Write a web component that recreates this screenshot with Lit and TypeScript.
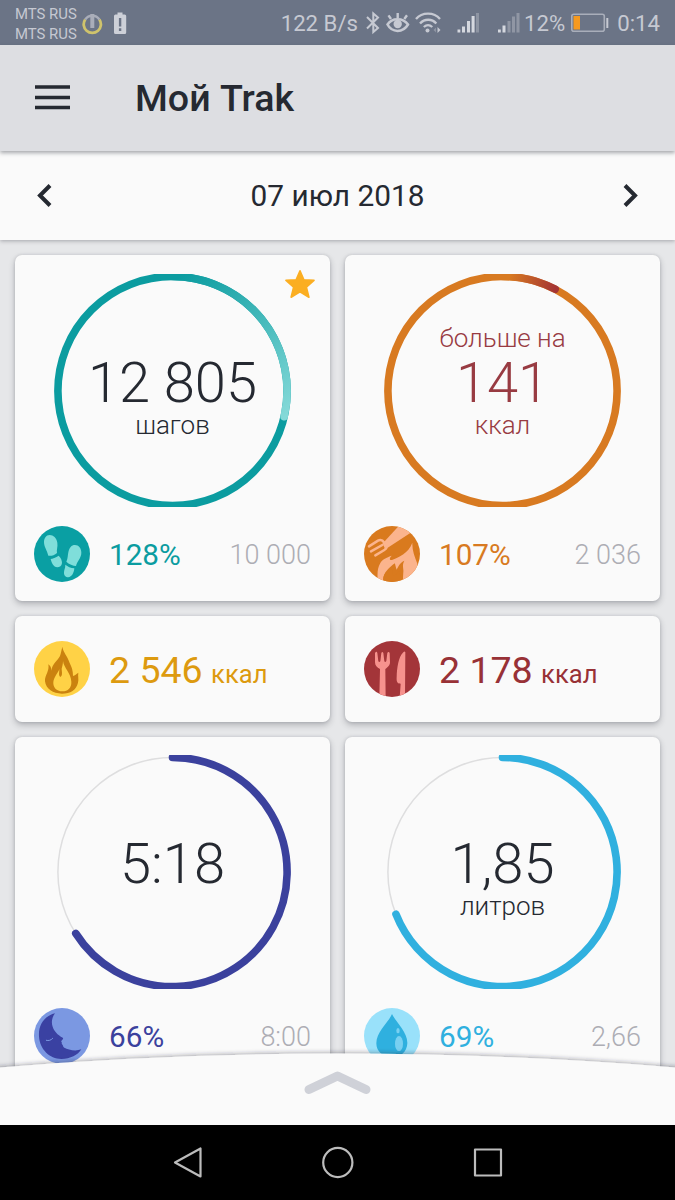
import { LitElement, html, svg, css, nothing } from "lit";
import { customElement, property } from "lit/decorators.js";

const DISC = {
  steps: svg`
    <circle cx="84" cy="84" r="84" fill="#0a9fa3"/>
    <g fill="#7fdeda">
      <path d="M47 27 C36 27 30 37 30 49 C30 62 39 73 43 89 C50 91 61 88 69 81 C67 71 72 63 70 50 C68 36 58 27 47 27Z"/>
      <path d="M50 99 C55 98 66 94 74 89 C81 96 84 103 84 111 C83 120 77 124 70 124 C58 123 53 111 50 99Z"/>
      <path d="M123 57 C134 57 142 67 142 80 C142 96 130 104 126 120 C118 120 104 114 97 107 C102 97 101 88 103 79 C106 65 112 57 123 57Z"/>
      <path d="M94 116 C101 122 110 126 121 127 C120 141 113 153 103 154 C95 154 89 148 90 139 C90 132 94 127 94 116Z"/>
    </g>`,
  balance: svg`
    <circle cx="84" cy="84" r="84" fill="#d97a1e"/>
    <g clip-path="url(#disc)">
      <path fill="#fbb48d" d="M106 -2 L140 20 L70 66 L58 50Z"/>
      <g fill="none" stroke="#fbb48d" stroke-width="7.500" stroke-linecap="round" stroke-linejoin="round">
        <path d="M15 61 L42 44 C50 40 57 44 61 50 L66 58 C69 65 67 69 61 72 L34 88"/><path d="M55 57 L21 76"/>
      </g>
      <path fill="#fbb48d" d="M55 50 L66 48 L72 60 L62 66Z"/>
      <path fill="#fbb48d" d="M42 172 C39 145 40 126 49 111 C57 98 70 94 83 89 C75 97 76 104 84 102 C103 94 133 83 145 50 C144 72 152 92 160 113 L162 132 L120 168 C114 157 119 146 118 132 C117 121 115 116 121 104 C108 110 104 119 98 131 C94 122 95 117 92 112 C76 126 54 140 58 168Z"/>
      <path fill="#d97a1e" d="M58 170 C55 143 70 134 84 130 C87 137 82 144 89 149 C97 146 101 140 106 134 C106 146 112 154 117 168Z"/>
    </g>`,
  burn: svg`
    <circle cx="84" cy="84" r="84" fill="#ffd246"/>
    <path fill="#ca820f" d="M85 17 C88 35 101 46 107 66 C113 78 117 88 117 105 C123 103 127 99 133 95 C131 106 135 114 132 125 C127 147 109 158 84 158 C57 158 36 144 33 121 C32 103 47 91 43 70 C49 74 52 80 52 89 C55 67 70 61 78 45 C81 37 82 28 85 17Z"/>
    <path fill="#ffd246" d="M87 60 C90 82 111 96 112 122 C113 140 102 151 85 151 C67 151 57 139 58 123 C60 107 73 95 76 84 C76 96 73 103 79 108 C87 103 83 91 83 83 C85 75 87 69 87 60Z"/>`,
  food: svg`
    <circle cx="84" cy="84" r="84" fill="#a33539"/>
    <g clip-path="url(#disc)" fill="#f6928d">
      <path d="M33 37 C35 31 39 31 40 36 L43 61 Q46 65 49 61 L52 36 Q55 30 58 36 L61 61 Q64 65 67 60 L70 36 C72 31 76 32 77 37 L78 64 C78 74 70 80 64 84 L65 170 L46 170 L48 84 C39 79 33 74 33 64Z"/>
      <path d="M124 34 L123 170 L107 170 L110 128 C100 127 97 123 98 108 C99 81 103 48 118 34 Q122 29 124 34Z"/>
    </g>`,
  sleep: svg`
    <circle cx="84" cy="84" r="84" fill="#7b98e2"/>
    <path fill="#3a41a2" d="M63 16 C29 25 13 52 15 85 C17 124 47 153 82 153 C109 153 132 141 142 124 C124 131 102 125 91 119 C86 117 88 112 84 109 C82 106 85 104 82 101 C80 97 89 94 87 90 C83 88 78 85 75 82 C57 68 44 42 63 16Z"/>
    <path fill="none" stroke="#7b98e2" stroke-width="3" stroke-linecap="round" d="M37 97 C44 99 51 97 56 91"/>`,
  water: svg`
    <circle cx="84" cy="84" r="84" fill="#99e1fa"/>
    <path fill="#2fb0df" d="M84 18 C96 43 131 72 130 106 C129 132 110 148 84 148 C57 148 37 131 37 106 C37 72 72 45 84 18Z"/>
    <ellipse cx="105" cy="107" rx="12" ry="23" fill="#79d0f1"/>
    <ellipse cx="102" cy="68" rx="5" ry="8" fill="#79d0f1"/>`,
} as const;
type DiscName = keyof typeof DISC;

@customElement("metric-icon")
class MetricIcon extends LitElement {
  @property() name: DiscName = "steps";
  static styles = css`
    :host { display: block; width: 56px; height: 56px; flex: none; }
    .disc { display: block; width: 56px; height: 56px; }
  `;
  render() {
    return html`<svg class="disc" viewBox="0 0 168 168">
      <defs><clipPath id="disc"><circle cx="84" cy="84" r="84"/></clipPath></defs>
      ${DISC[this.name]}
    </svg>`;
  }
}

interface Metric {
  icon: DiscName;
  percent: number;
  color: string;
  over?: string;
  goal: string;
  pre?: string;
  value: string;
  unit?: string;
  text?: string;
  starred?: boolean;
}

@customElement("progress-ring")
class ProgressRing extends LitElement {
  @property({ type: Number }) percent = 0;
  @property() color = "#000";
  @property() over = "";
  static styles = css`
    :host { display: block; }
    .ring { display: block; width: 240px; height: 233.5px; }
  `;
  private arc(percent: number) {
    const a = (percent / 100) * 2 * Math.PI;
    const r = 114.6;
    const x = 119.5 + r * Math.sin(a);
    const y = 117 - r * Math.cos(a);
    return `M119.5 ${117 - r} A${r} ${r} 0 ${percent > 50 ? 1 : 0} 1 ${x.toFixed(2)} ${y.toFixed(2)}`;
  }
  render() {
    const full = this.percent >= 100;
    const extra = this.percent - 100 + 0.6;
    const a = (extra / 100) * 2 * Math.PI;
    return html`<svg class="ring" viewBox="0 0 240 233.5">
      <defs>
        <linearGradient id="over" gradientUnits="userSpaceOnUse" x1="126" y1="3"
          x2=${119.5 + 114.6 * Math.sin(a)} y2=${117 - 114.6 * Math.cos(a)}>
          <stop offset="0" stop-color=${this.color}/>
          <stop offset="1" stop-color=${this.over || this.color}/>
        </linearGradient>
      </defs>
      ${full
        ? svg`<circle cx="119.5" cy="117" r="114.6" fill="none" stroke=${this.color} stroke-width="7.6"/>
            <path d=${this.arc(extra)} fill="none" stroke="url(#over)" stroke-width="7.6" stroke-linecap="round"/>`
        : svg`<circle cx="119.5" cy="117" r="114.6" fill="none" stroke="#dededf" stroke-width="1.5"/>
            <path d=${this.arc(this.percent)} fill="none" stroke=${this.color} stroke-width="7.6" stroke-linecap="round"/>`}
    </svg>`;
  }
}

@customElement("goal-card")
class GoalCard extends LitElement {
  @property({ attribute: false }) metric!: Metric;
  static styles = css`
    :host {
      display: block; position: relative; box-sizing: border-box; height: 346px;
      padding: 18.5px 19px; border-radius: 7px; background: #fafafa;
      box-shadow: 0 3px 6px rgba(40, 44, 54, .28), 0 0 3px rgba(40, 44, 54, .16);
    }
    .dial { display: grid; justify-content: center; }
    .dial > * { grid-area: 1 / 1; }
    .label {
      display: flex; flex-direction: column; align-items: center;
      padding-top: 49px; color: #252931; font-weight: 300; white-space: nowrap;
    }
    .pre { height: 30px; line-height: 30px; font-size: 26px; }
    .value { line-height: 60px; font-size: 56px; }
    .unit { line-height: 24px; font-size: 26px; }
    .red { color: #983b42; }
    .foot { display: flex; align-items: center; margin-top: 19px; }
    .percent { flex: 1; margin-left: 19px; font-size: 29.7px; line-height: 56px; padding-top: 1px; height: 55px; }
    .goal { font-size: 27px; font-weight: 300; color: #adadb4; line-height: 56px; padding-top: 1px; height: 55px; }
    .star { position: absolute; top: 14px; right: 15px; width: 30px; height: 30px; }
  `;
  render() {
    const m = this.metric;
    return html`
      <div class="dial">
        <progress-ring .percent=${m.percent} .color=${m.color} .over=${m.over ?? ""}></progress-ring>
        <div class="label ${m.text ?? ""}">
          <div class="pre">${m.pre ?? nothing}</div>
          <div class="value">${m.value}</div>
          ${m.unit ? html`<div class="unit">${m.unit}</div>` : nothing}
        </div>
      </div>
      <div class="foot">
        <metric-icon .name=${m.icon}></metric-icon>
        <div class="percent" style="color:${m.color}">${m.percent}%</div>
        <div class="goal">${m.goal}</div>
      </div>
      ${m.starred
        ? html`<svg class="star" viewBox="0 0 30 30"><path fill="#fbae22" stroke="#fbae22" stroke-width="1.6" stroke-linejoin="round"
            d="M15 1.800 L18.900 10.700 L29 11.400 L21.400 18.200 L23.900 28.200 L15 22.800 L6.100 28.200 L8.600 18.200 L1 11.400 L11.100 10.700Z"/></svg>`
        : nothing}
    `;
  }
}

@customElement("energy-card")
class EnergyCard extends LitElement {
  @property() icon: DiscName = "burn";
  @property() value = "";
  @property() color = "";
  static styles = css`
    :host {
      display: flex; align-items: center; box-sizing: border-box; height: 105.5px;
      padding: 0 19px; border-radius: 7px; background: #fafafa;
      box-shadow: 0 3px 6px rgba(40, 44, 54, .28), 0 0 3px rgba(40, 44, 54, .16);
    }
    .amount { margin-left: 19px; padding-top: 6px; white-space: nowrap; font-size: 37.5px; line-height: 50px; }
    .unit { font-size: 25.6px; margin-left: 8.5px; }
  `;
  render() {
    return html`<metric-icon .name=${this.icon}></metric-icon>
      <div class="amount" style="color:${this.color}">${this.value}<span class="unit">ккал</span></div>`;
  }
}

@customElement("status-bar")
class StatusBar extends LitElement {
  static styles = css`
    :host {
      display: flex; align-items: center; justify-content: space-between; box-sizing: border-box;
      height: 45px; padding: 0 15px; background: #6b7486; color: #c6c9d2; font-size: 22.2px;
    }
    .carriers { width: 63px; font-size: 14.9px; line-height: 20px; white-space: nowrap; padding-top: 2px; }
    .side { display: flex; align-items: center; }
    .text { line-height: 45px; padding-top: 1px; height: 44px; white-space: nowrap; }
    svg { display: block; flex: none; }
    .notices { margin-left: 4px; }
    .glyphs { margin: 0 3px 0 7px; }
    .battery { margin: 0 8px 0 6px; }
  `;
  render() {
    return html`
      <div class="side">
        <div class="carriers">MTS RUS<br>MTS RUS</div>
        <svg class="notices" width="46" height="45" viewBox="0 0 46 45">
          <path d="M3.200 19.500 A8.600 8.600 0 1 0 17.400 19.500" fill="none" stroke="#cfc36c" stroke-width="2.800"/>
          <path d="M3.200 19.500 A8.600 8.600 0 0 1 17.400 19.500" fill="none" stroke="#a9adb9" stroke-width="2.400"/>
          <path d="M10.300 14 V28" stroke="#a9adb9" stroke-width="4"/>
          <path d="M35.500 12.500h5v2h2.200a1.500 1.500 0 0 1 1.500 1.500v16.500a1.500 1.500 0 0 1-1.500 1.500h-9.200a1.500 1.500 0 0 1-1.500-1.500v-16.500a1.500 1.500 0 0 1 1.500-1.500h2z" fill="#cdd0d8"/>
          <path d="M38.100 18 V26.500 M38.100 28.300 V31" stroke="#6b7486" stroke-width="2.400"/>
        </svg>
      </div>
      <div class="side">
        <div class="text">122 B/s</div>
        <svg class="glyphs" width="156" height="45" viewBox="366 0 156 45">
          <path d="M368 17 L379 28 L374.300 32 V13.500 L379 17.500 L368 28.500" fill="none" stroke="#c6c9d2" stroke-width="2"/>
          <path d="M388.500 24.500 C393 17.500 404 17.500 409 24.500 C404 33 393 33 388.500 24.500Z" fill="none" stroke="#c6c9d2" stroke-width="2.500"/>
          <circle cx="398.700" cy="24" r="4.200" fill="#c6c9d2"/>
          <path d="M398.700 18 V13 M392 19 L389.500 15.300 M405.300 19 L408 15.300" stroke="#c6c9d2" stroke-width="2.400"/>
          <g fill="none" stroke="#c6c9d2" stroke-width="2.300">
            <path d="M417 19 C423 11.800 435 11.800 441 19"/><path d="M421 23.500 C425.500 18.500 433 18.500 437.300 23.500"/><path d="M424.800 27 Q429 23.300 433.300 27"/>
          </g>
          <circle cx="428.500" cy="30.500" r="2" fill="#c6c9d2"/>
          <path d="M437 27.500 L434.500 30 L437 32.500Z" fill="#8e95a3"/><path d="M438.500 27 L441.500 30 L438.500 33Z" fill="#c6c9d2"/>
          <g fill="#d5d8df">
            <path d="M458.500 29.500h2.800v3h-2.800zM463 26.500h3v6h-3zM468 21h3v11.500h-3zM472.600 16h3v16.500h-3z"/>
            <path d="M477 13h3v19.500h-3z" fill="#8e95a3"/>
            <path d="M499 29.500h2.800v3h-2.800zM503.500 25.500h3v7h-3z"/>
            <path d="M508.500 21h3v11.500h-3zM513 16.500h3v16h-3zM517.500 13h3v19.500h-3z" fill="#9096a4"/>
          </g>
        </svg>
        <div class="text">12%</div>
        <svg class="battery" width="38" height="45" viewBox="0 0 38 45">
          <rect x=".8" y="14.200" width="32.500" height="17" rx="2" fill="none" stroke="#a9aeba" stroke-width="1.600"/>
          <path d="M36.300 18 V28" stroke="#c6c9d2" stroke-width="2"/>
          <rect x="2.500" y="16" width="6.500" height="13.500" fill="#f5991f"/>
        </svg>
        <div class="text">0:14</div>
      </div>`;
  }
}

@customElement("app-root")
class AppRoot extends LitElement {
  static styles = css`
    :host {
      display: flex; flex-direction: column; width: 675px; height: 1200px; overflow: hidden;
      position: relative; background: #e6e7e9; font-family: Roboto, "Liberation Sans", sans-serif; color: #252931;
    }
    .bar {
      display: flex; align-items: center; gap: 65px; height: 106px; padding: 0 34px;
      box-sizing: border-box; background: #dddee2; position: relative; z-index: 2;
      box-shadow: 0 2px 4px rgba(40, 44, 54, .4);
    }
    .title { font-size: 37.6px; font-weight: 500; line-height: 106px; }
    .date {
      display: flex; align-items: center; justify-content: space-between; height: 89px;
      padding: 0 36px; background: #fafafa; position: relative; z-index: 1;
      box-shadow: 0 1px 4px rgba(40, 44, 54, .35); font-size: 29.8px;
    }
    .grid {
      flex: 1; min-height: 0; overflow: hidden; display: grid; grid-template-columns: 315px 315px;
      align-content: start; gap: 15px; padding: 15px;
    }
    .sheet { position: absolute; left: 0; bottom: 75px; display: block; }
    .nav { height: 75px; flex: none; background: #000; display: flex; align-items: center; justify-content: center; }
    svg { display: block; flex: none; }
  `;
  private top: Metric[] = [
    { icon: "steps", percent: 128, color: "#0b9ca0", over: "#84d9d8", goal: "10 000", value: "12 805", unit: "шагов", starred: true },
    { icon: "balance", percent: 107, color: "#d87a21", over: "#a43434", goal: "2 036", pre: "больше на", value: "141", unit: "ккал", text: "red" },
  ];
  private bottom: Metric[] = [
    { icon: "sleep", percent: 66, color: "#3b419d", goal: "8:00", value: "5:18" },
    { icon: "water", percent: 69, color: "#30b0df", goal: "2,66", value: "1,85", unit: "литров" },
  ];
  render() {
    return html`
      <status-bar></status-bar>
      <div class="bar">
        <svg width="36" height="26" viewBox="0 0 36 26"><path d="M1 2H36M1 12.500H36M1 22.500H36" stroke="#252931" stroke-width="3.700"/></svg>
        <div class="title">Мой Trak</div>
      </div>
      <div class="date">
        <svg width="16" height="26" viewBox="0 0 16 26"><path d="M14 2.500 L4 12.500 L14 22.500" fill="none" stroke="#252931" stroke-width="4"/></svg>
        <div>07 июл 2018</div>
        <svg width="16" height="26" viewBox="0 0 16 26"><path d="M2 2.500 L12 12.500 L2 22.500" fill="none" stroke="#252931" stroke-width="4"/></svg>
      </div>
      <div class="grid">
        ${this.top.map((m) => html`<goal-card .metric=${m}></goal-card>`)}
        <energy-card icon="burn" value="2 546" color="#dd9a0f"></energy-card>
        <energy-card icon="food" value="2 178" color="#983136"></energy-card>
        ${this.bottom.map((m) => html`<goal-card .metric=${m}></goal-card>`)}
      </div>
      <svg class="sheet" width="675" height="84" viewBox="0 0 675 84">
        <defs><filter id="lift" x="-5%" y="-20%" width="110%" height="140%"><feDropShadow dx="0" dy="-1" stdDeviation="2" flood-color="#282c36" flood-opacity=".4"/></filter></defs>
        <path d="M-20 28 Q337 -3 695 28 V100 H-20Z" fill="#fafafa" filter="url(#lift)"/>
        <path d="M309 48.500 L337.500 35 L366 48.500" fill="none" stroke="#cfd1d8" stroke-width="9" stroke-linecap="round" stroke-linejoin="round"/>
      </svg>
      <div class="nav">
        <svg width="330" height="75" viewBox="172.500 0 330 75" fill="none" stroke="#bcbcbc" stroke-width="2.200" stroke-linejoin="round">
          <path d="M174.500 37.500 L200 23.500 V51.500Z"/><circle cx="337.300" cy="37.500" r="14.600"/><rect x="474.500" y="24.500" width="26" height="26"/>
        </svg>
      </div>`;
  }
}
